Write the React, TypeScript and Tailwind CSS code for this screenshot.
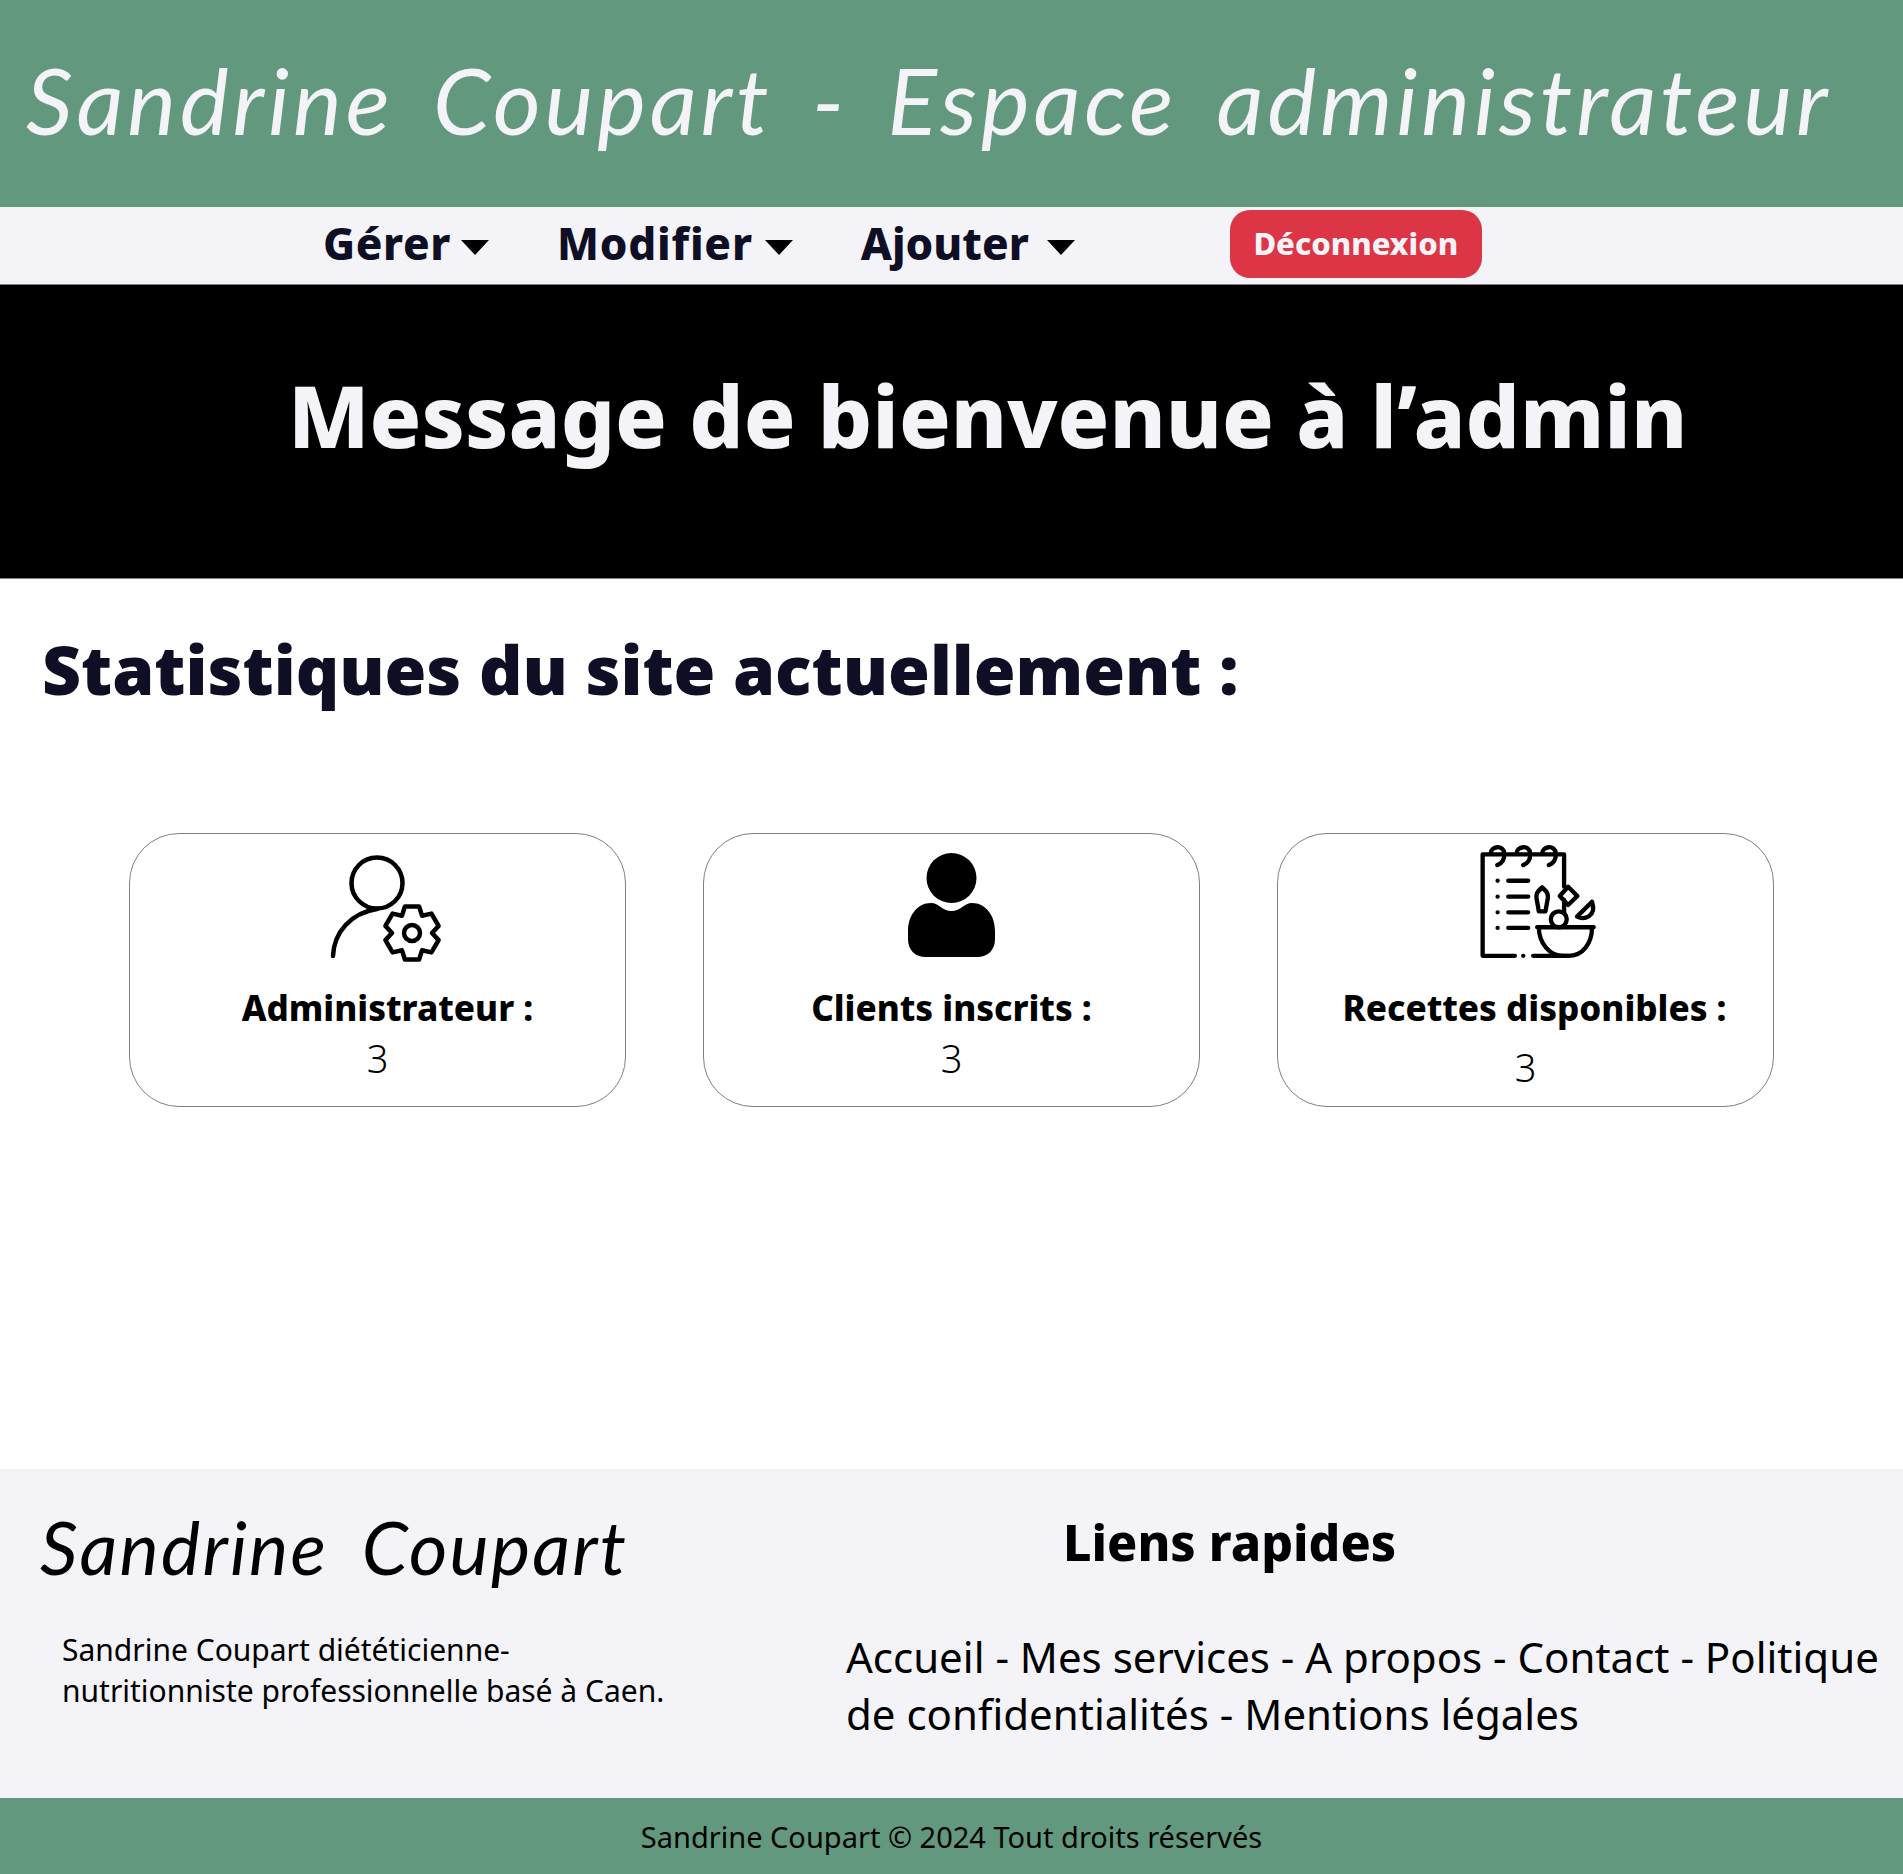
import React from "react";

const hand = "font-['Lato','Open_Sans',sans-serif] italic font-normal";
const heavy = "font-['Noto_Sans',sans-serif]";
const body = "font-['Noto_Sans',sans-serif]";

function Caret({ gap }: { gap: string }) {
  return <span className={`mt-[9px] inline-block h-0 w-0 border-x-[14px] border-t-[15px] border-x-transparent border-t-black ${gap}`} />;
}

function gearPath(cx: number, cy: number, outer: number, root: number) {
  const pts: string[] = [];
  for (let i = 0; i < 6; i++) {
    const a = -90 + i * 60;
    const list: [number, number][] = [
      [a - 30, root],
      [a - 15, outer],
      [a + 15, outer],
    ];
    for (const [deg, r] of list) {
      const t = (deg * Math.PI) / 180;
      pts.push(`${(cx + r * Math.cos(t)).toFixed(1)} ${(cy + r * Math.sin(t)).toFixed(1)}`);
    }
  }
  return `M${pts.join("L")}Z`;
}

function AdminIcon() {
  return (
    <svg viewBox="0 0 120 110" className="h-[110px] w-[120px]" fill="none" stroke="black" strokeWidth="4.5" strokeLinecap="round" strokeLinejoin="round">
      <circle cx="52" cy="29" r="25.5" />
      <path d="M8 102C9 78 26 59 52 55" />
      <path d={gearPath(87, 79, 27.5, 20)} />
      <circle cx="87" cy="79" r="8" />
    </svg>
  );
}

function ClientIcon() {
  return (
    <svg viewBox="0 0 87 104" className="mb-[7px] h-[104px] w-[87px]" fill="black">
      <circle cx="43.5" cy="25" r="25" />
      <path d="M23 50c8 0 11 8 20.500 8s12.500-8 20.500-8c14 0 23 13 23 28v8c0 11-7 18-18 18H18C7 104 0 97 0 86v-8c0-15 9-28 23-28z" />
    </svg>
  );
}

function Spiral({ dx }: { dx: number }) {
  return <path transform={`translate(${dx} 0)`} d="M92 70C92 48 131 42 133 70C134 88 126 100 112 105" />;
}

function RecipeIcon() {
  return (
    <svg viewBox="45 30 370 360" className="mb-[4px] h-[120px] w-[123px]" fill="none" stroke="black" strokeWidth="13" strokeLinecap="round" strokeLinejoin="round">
      <path d="M165 378H68V73H313V170M313 210V250M220 378H325" />
      <path d="M190 378h.1" />
      <Spiral dx={0} />
      <Spiral dx={78} />
      <Spiral dx={155} />
      <path d="M113 152h.1M113 200h.1M113 247h.1M113 294h.1" />
      <path d="M145 152h60M145 200h60M145 247h60M145 294h60" />
      <path d="M247 172l-12 12c-5 6-6 12-5 20l7 40h20l7-40c1-8 0-14-5-20z" />
      <path d="M325 170l28 28-28 27-25-27z" />
      <path d="M397 215L352 260C372 270 412 262 397 215z" />
      <circle cx="297" cy="268" r="24" />
      <path d="M232 292H402M237 292C237 340 270 378 310 378H325C370 378 397 340 397 292" />
    </svg>
  );
}

function Card({ icon, label, value, low, shift, labelShift }: { icon: React.ReactNode; label: string; value: string; low?: boolean; shift: string; labelShift: string }) {
  return (
    <div className="flex h-[274px] w-[497px] flex-col items-center rounded-[50px] border border-[#808080] bg-white">
      <div className={`flex h-[130px] items-end ${shift}`}>{icon}</div>
      <p className={`mt-[20px] text-[35px] leading-[48px] font-extrabold text-black ${heavy} ${labelShift}`}>{label}</p>
      <p className={`text-[38px] leading-[52px] font-light text-black ${body} ${low ? "mt-[9px]" : "mt-[0px]"}`}>{value}</p>
    </div>
  );
}

export default function App() {
  return (
    <div className={`flex min-h-[1874px] w-full flex-col bg-white ${body}`}>
      <header className="flex h-[207px] items-center justify-start bg-[#62997E] pl-[26px]">
        <h1 className={`mb-[8px] whitespace-nowrap text-[92px] leading-none tracking-[3.900px] [word-spacing:14px] text-[#F3F3F8] ${hand}`}>Sandrine Coupart - Espace administrateur</h1>
      </header>
      <nav className={`flex h-[78px] items-center border-b border-[#808080] bg-[#F3F3F8] pl-[323px] text-[#0E0E25] ${heavy}`}>
        <span className="mb-[6px] flex items-center text-[44px] font-extrabold leading-none tracking-[0.6px]">Gérer<Caret gap="ml-[10px]" /></span>
        <span className="mb-[6px] ml-[68px] flex items-center text-[44px] font-extrabold leading-none tracking-[0.8px]">Modifier<Caret gap="ml-[12px]" /></span>
        <span className="mb-[6px] ml-[68px] flex items-center text-[44px] font-extrabold leading-none">Ajouter<Caret gap="ml-[18px]" /></span>
        <button className="mb-[4px] ml-[155px] h-[68px] w-[252px] rounded-[20px] bg-[#DC3545] text-[31px] font-extrabold text-[#F3F3F8]">Déconnexion</button>
      </nav>
      <section className="flex h-[294px] items-start justify-start border-b border-[#808080] bg-black pl-[288px]">
        <h2 className={`mt-[75px] whitespace-nowrap text-[85.500px] leading-[110px] font-extrabold text-[#F3F3F8] ${heavy}`}>Message de bienvenue à l’admin</h2>
      </section>
      <h2 className={`mt-[53px] pl-[42px] text-[67.700px] leading-[74px] font-black text-[#0E0E25] ${heavy}`}>Statistiques du site actuellement :</h2>
      <section className="mt-[127px] flex justify-center gap-[77px]">
        <Card icon={<AdminIcon />} label="Administrateur :" value="3" shift="ml-[15px]" labelShift="ml-[20px]" />
        <Card icon={<ClientIcon />} label="Clients inscrits :" value="3" shift="" labelShift="" />
        <Card icon={<RecipeIcon />} label="Recettes disponibles :" value="3" low shift="ml-[22px]" labelShift="ml-[18px]" />
      </section>
      <footer className="mt-auto">
        <div className="flex h-[329px] bg-[#F3F3F8]">
          <div className="w-[846px] pl-[40px]">
            <p className={`mt-[28px] whitespace-nowrap text-[74px] leading-[100px] tracking-[2.200px] [word-spacing:14px] text-black ${hand}`}>Sandrine Coupart</p>
            <p className={`mt-[32px] ml-[22px] w-[660px] text-[30px] leading-[41px] text-black ${body}`}>Sandrine Coupart diététicienne-<br />nutritionniste professionnelle basé à Caen.</p>
          </div>
          <div className="flex-1">
            <p className={`mt-[39px] ml-[217px] text-[50px] leading-[68px] font-extrabold text-black ${heavy}`}>Liens rapides</p>
            <p className={`mt-[52px] text-[42px] leading-[57px] text-black ${body}`}>Accueil - Mes services - A propos - Contact - Politique de confidentialités - Mentions légales</p>
          </div>
        </div>
        <div className={`flex h-[76px] items-center justify-center bg-[#62997E] pt-[1px] text-[29px] text-black ${body}`}>Sandrine Coupart © 2024 Tout droits réservés</div>
      </footer>
    </div>
  );
}
